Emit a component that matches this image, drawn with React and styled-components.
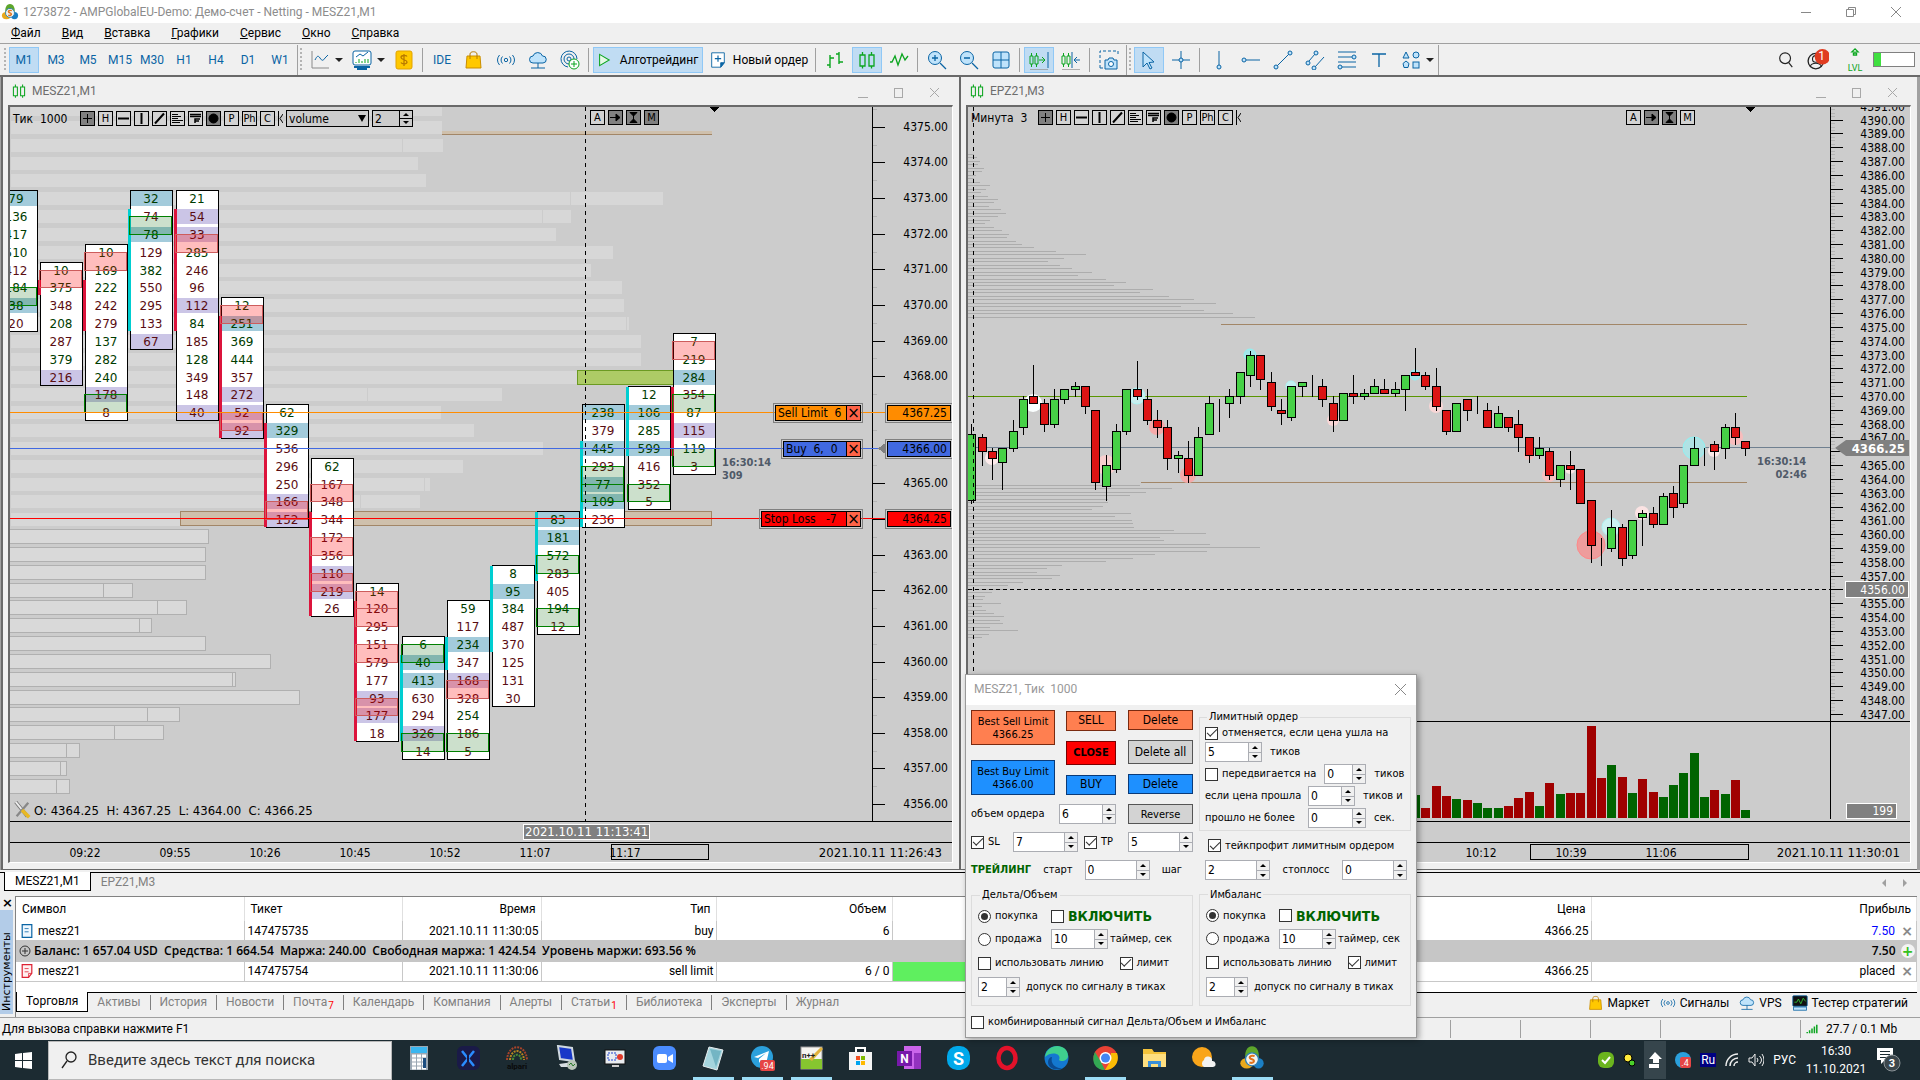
import React from 'react'
import styled, { createGlobalStyle, css } from 'styled-components'

const UI = 'Roboto, "Open Sans", sans-serif'
const CHART = '"DejaVu Sans Condensed", "DejaVu Sans", sans-serif'
const WIDE = '"DejaVu Sans", sans-serif'

/* ---------- data ---------- */

const timeframes = ['M1', 'M3', 'M5', 'M15', 'M30', 'H1', 'H4', 'D1', 'W1']
const menu = ['Файл', 'Вид', 'Вставка', 'Графики', 'Сервис', 'Окно', 'Справка']

// value, text colour (g / r), cell fill (b = blue, l = lilac)
const clusters = [
  { at: 0, rows: '79gb 136g 417g 510g 412r 184g 38gb 20r', marks: [['g', 5, 6]] },
  { at: 4, rows: '10g 375g 348r 208g 287r 379g 216rl', marks: [['r', 4, 5]], side: ['r', 5, 5] },
  { at: 3, rows: '10g 169g 222g 242r 279r 137g 282g 240g 178rl 8r', marks: [['r', 3, 4], ['g', 11, 12]], side: ['r', 5, 7] },
  { at: 0, rows: '32gb 74r 78gb 129r 382g 550r 295r 133r 67rl', marks: [['g', 1, 2]], side: ['c', 1, 7] },
  { at: 0, rows: '21g 54rl 33rl 285g 246r 96r 112rl 84g 185r 128g 349r 148r 40rl', marks: [['r', 2, 3]], side: ['r', 1, 7] },
  { at: 6, rows: '12g 251gb 369g 444g 357r 272rl 52rl 92rl', marks: [['r', 6, 7], ['r', 12, 13]], side: ['r', 7, 13] },
  { at: 12, rows: '62g 329gb 536r 296r 250r 166rl 152rl', marks: [['r', 17, 18]], side: ['r', 13, 18] },
  { at: 15, rows: '62g 167r 348r 344r 172r 356r 110rl 219rl 26r', marks: [['r', 16, 17], ['r', 19, 20], ['r', 21, 22]], side: ['r', 18, 23] },
  { at: 22, rows: '14g 120r 295r 151r 579r 177r 93rl 177rl 18r', marks: [['r', 22, 23], ['r', 23, 24], ['r', 25, 26], ['r', 28, 29]], side: ['r', 23, 30] },
  { at: 25, rows: '6g 40gb 413gb 630r 294r 326rl 14r', marks: [['g', 25, 26], ['g', 30, 31]], side: ['c', 26, 30] },
  { at: 23, rows: '59g 117r 234gb 347r 168rl 328r 254g 186r 5r', marks: [['r', 27, 28], ['g', 30, 31]], side: ['c', 25, 26] },
  { at: 21, rows: '8g 95gb 384g 487r 370r 125r 131r 30r', marks: [], side: ['c', 21, 25] },
  { at: 18, rows: '83gb 181gb 572g 283r 405r 194g 12r', marks: [['g', 20, 21], ['g', 23, 24]], side: ['c', 18, 21] },
  { at: 12, rows: '238gb 379r 445gb 293r 77gb 109gb 236r', marks: [['g', 15, 16], ['g', 16, 17]], side: ['c', 14, 18] },
  { at: 11, rows: '12g 106gb 285g 599gb 416r 352r 5r', marks: [['g', 16, 17]], side: ['c', 11, 14] },
  { at: 8, rows: '7g 219g 284gb 354r 87g 115rl 119g 3r', marks: [['r', 8, 9], ['g', 11, 12], ['g', 14, 15]], side: ['r', 11, 14] },
]

// volume profile of the left chart: row, length, inner split
const profile = [
  [-5, 431], [-4, 431], [-3, 432, 392], [-2, 407], [-1, 415], [0, 652, 560], [1, 560, 532], [2, 545],
  [3, 602], [4, 580], [5, 611], [6, 613], [7, 618, 616], [8, 630], [9, 630], [10, 567], [11, 491, 357],
  [12, 430], [13, 463], [14, 532], [15, 452], [16, 419, 414], [17, 409, 350], [18, 170],
]
const lowProfile = [
  [19, 199], [20, 196], [21, 196], [22, 123, 93], [23, 177, 147], [24, 142, 129], [25, 196], [26, 261],
  [27, 226, 222], [28, 290], [29, 170, 137], [30, 154, 104], [31, 70, 56], [32, 57, 50], [33, 60, 46],
]

// high, low, open, close in ticks from 4370.00
const candles = [
  [-8, -31, -30, -11], [-11, -20, -12, -16], [-15, -24, -16, -18], [-15, -27, -19, -15], [-7, -16, -15, -10],
  [0, -11, -9, -1], [9, -2, 0, -2], [-1, -10, -2, -8], [2, -9, -8, -1], [2, -2, -1, 2], [4, 0, 2, 3],
  [3, -5, 3, -3], [-4, -27, -4, -25], [-17, -30, -26, -20], [-8, -22, -21, -10], [2, -11, -10, 2],
  [10, -1, 2, 0], [2, -8, -1, -7], [-4, -12, -7, -9], [-7, -21, -9, -18], [-16, -22, -18, -17],
  [-13, -25, -18, -23], [-9, -23, -23, -12], [0, -11, -11, -2], [-1, -10, -2, -2], [2, -6, -2, 0],
  [7, -2, 0, 7], [13, 3, 6, 12], [12, 2, 12, 5], [7, -4, 4, -3], [-1, -8, -4, -5], [3, -7, -6, 3],
  [4, 0, 3, 4], [6, 0, 4, 4], [5, -3, 3, -1], [0, -10, -2, -7], [1, -7, -7, 1], [6, -2, 1, 0],
  [2, -1, 0, 1], [5, 1, 1, 3], [5, 1, 2, 1], [4, 0, 1, 2], [6, -4, 2, 6], [14, 6, 7, 6], [7, 2, 6, 3],
  [8, -4, 3, -3], [-4, -11, -4, -10], [-2, -10, -10, -2], [-1, -7, -1, -4], [0, -5, -3, -3],
  [-2, -9, -4, -9], [-3, -9, -9, -5], [-6, -10, -6, -9], [-4, -16, -8, -12], [-12, -19, -12, -17],
  [-12, -18, -17, -15], [-15, -24, -16, -23], [-20, -26, -24, -20], [-16, -27, -20, -21],
  [-21, -31, -21, -31], [-30, -48, -30, -43], [-41, -49, -43, -43], [-33, -45, -44, -38],
  [-37, -49, -38, -47], [-36, -47, -46, -36], [-33, -43, -35, -34], [-32, -38, -34, -37],
  [-28, -37, -37, -29], [-26, -35, -28, -32], [-20, -32, -31, -20], [-12, -20, -20, -15],
  [-15, -20, -15, -15], [-13, -21, -14, -16], [-8, -18, -15, -9], [-5, -14, -9, -12], [-13, -17, -13, -15],
]

// candle, tick, radius, fill, outline
const bubbles = [
  [6, -2, 9, '#fbffff'], [2, -18, 7, '#fdebeb'], [13, -20, 10, '#f8cfcf'], [16, 0, 8, '#c9eeee', '#aef5f5'],
  [18, -9, 8, '#f5a9a9'], [21, -23, 8, '#f5a9a9'], [27, 12, 6, '#a5e6e8', '#8ef3f5'], [31, 3, 5, '#c5eff0', '#aef5f5'],
  [35, -7, 6, '#f9d6d6'], [43, 6, 5, '#a5e6e8', '#8ef3f5'], [45, -3, 7, '#f9d6d6'], [54, -17, 5, '#f6b8b8'],
  [56, -23, 7, '#f8c0c0'], [58, -21, 5, '#fbe3e3'], [60, -43, 14, '#ee9c9c', '#ff8888'], [62, -38, 9, '#cdf1f1', '#aef5f5'],
  [65, -34, 7, '#fbe3e3'], [70, -15, 11, '#b0e2e4', '#8ef3f5'], [72, -16, 6, '#fdebeb'], [74, -12, 8, '#f8bcbc'],
]

// height and colour, first bar belongs to candle 43
const volumes = (
  '23g 10r 32r 22r 19g 18r 15g 10g 10g 12r 20r 26r 12g 35r 24g 25r 25r 92r 40r 53g 41r 25g 39r 26r ' +
  '21g 33g 45g 65g 21g 28r 24g 38r 8g'
).split(' ')

const upperLines = [
  6, 9, 12, 10, 16, 14, 8, 6, 12, 22, 18, 13, 20, 30, 26, 21, 33, 38, 30, 22, 17, 26, 34, 41, 39, 48, 54, 66, 88,
  118, 96, 80, 92, 104, 124, 110, 138, 158, 146, 185, 172, 201, 226, 248, 213, 236, 265, 287,
]
const lowerLines = [
  172, 204, 178, 162, 140, 140, 135, 124, 163, 147, 164, 165, 166, 206, 238, 192, 196, 242, 292, 239, 187, 165,
  138, 94, 79, 69, 92, 84, 55, 40, 39, 24, 17, 15, 33, 14, 18, 26, 36, 32, 35, 22, 50, 21, 14,
]

/* ---------- small drawings ---------- */

const blue = '#0a64a4'
const sky = '#bfe3fb'
const green = '#0ba51f'

const glyphs = {
  chart: <><path d="M2 1v17h17" stroke="#8a8a8a" /><path d="M5 10c2-4 3-5 5-2s3 3 5 0l3-3" stroke={blue} /></>,
  indicators: <><rect x="1" y="1" width="18" height="14" rx="2" stroke={blue} fill="#fff" /><path d="M4 7l4-3 3 2 5-4" stroke={blue} /><path d="M4 13v-1M7 13V9M10 13v-2M13 13V9M16 13v-4" stroke={green} /><path d="M2 17h16M5 19h10" stroke={blue} strokeWidth="2" /></>,
  dollar: <><rect x="2" y="1" width="16" height="18" rx="2" fill="#ffc800" stroke="#e2a400" /><path d="M13 6.500c-1-1.500-6-1.500-6 1s6 2 6 4.500-5 2.500-6 .5M10 4v12" stroke="#b87a00" strokeWidth="1.300" /></>,
  bag: <><path d="M3 6h13l1 12H2z" fill="#ffc800" stroke="#c98d00" /><path d="M6 9V4c0-3 7-3 7 0v5" stroke="#b87a00" /></>,
  signal: <><circle cx="10" cy="10" r="1.700" stroke={blue} /><path d="M6.500 6.500a5 5 0 0 0 0 7M13.500 6.500a5 5 0 0 1 0 7M3.500 5a8 8 0 0 0 0 10M16.500 5a8 8 0 0 1 0 10" stroke={blue} /></>,
  cloud: <><path d="M5 13a3.500 3.500 0 0 1 0-7 5 5 0 0 1 9.500 0 3.500 3.500 0 0 1 .5 7z" fill={sky} stroke={blue} /><path d="M10 13v5M3 18h14" stroke={blue} /></>,
  radar: <><circle cx="9" cy="9" r="2" stroke={blue} /><path d="M9 14a5 5 0 1 1 5-5M8 17a8 8 0 1 1 9-8" stroke={blue} /><circle cx="14" cy="14" r="5" fill="#fff" stroke={green} /><path d="M14 11v6M11 14h6" stroke={green} /></>,
  play: <path d="M2 3l12 7-12 7z" fill="#e6f9e6" stroke={green} strokeWidth="1.300" />,
  order: <><path d="M3 2h14v11l-4 5H3z" fill="#fff" stroke={blue} /><path d="M17 13h-4v5z" fill={blue} stroke={blue} /><path d="M10 5v7M6.500 8.500h7" stroke={blue} strokeWidth="1.300" /></>,
  bars: <path d="M5 5v13M2 15h3M5 8h4M14 2v12M11 4h3M14 12h4" stroke={green} strokeWidth="1.400" />,
  candles: <path d="M3 5h5v11H3zM5.500 2v3M5.500 16v2.500M12 5h5v11h-5zM14.500 2v3M14.500 16v2.500" stroke={green} strokeWidth="1.300" />,
  line: <path d="M1 12h2l3-6 3 9 4-11 3 6 3-4" stroke={green} strokeWidth="1.300" />,
  zoomIn: <><circle cx="8" cy="8" r="6.500" fill={sky} stroke={blue} /><path d="M13 13l6 6M8 5v6M5 8h6" stroke={blue} strokeWidth="1.300" /></>,
  zoomOut: <><circle cx="8" cy="8" r="6.500" fill={sky} stroke={blue} /><path d="M13 13l6 6M5 8h6" stroke={blue} strokeWidth="1.300" /></>,
  grid: <><rect x="2" y="2" width="16" height="16" rx="2" fill={sky} stroke={blue} /><path d="M10 2v16M2 10h16" stroke={blue} /></>,
  shift: <><path d="M1 6h3v8H1zM2.500 3v3M2.500 14v3M6 6h3v8H6zM7.500 3v3M7.500 14v3M10 10h6M13 7l3 3-3 3" stroke={green} /><path d="M19 2v16" stroke={blue} /><path d="M1 20h18" stroke="#999" strokeWidth="1.500" /></>,
  scroll: <><path d="M1 6h3v8H1zM2.500 3v3M2.500 14v3M6 6h3v8H6zM7.500 3v3M7.500 14v3" stroke={green} /><path d="M11 2v16M13 10h6M16 7l-3 3 3 3" stroke={blue} /><path d="M1 20h18" stroke="#999" strokeWidth="1.500" /></>,
  camera: <><path d="M1 18V1h18v5M1 18h3" stroke={blue} strokeDasharray="3 2" /><path d="M6 10h3l1-2h4l1 2h3v9H6z" fill={sky} stroke={blue} /><circle cx="12" cy="14" r="2.500" fill="#fff" stroke={blue} /></>,
  cursor: <path d="M4 2l11 10-5 .5 3 5.500-2 1-3-6-4 4z" fill={sky} stroke={blue} />,
  cross: <><path d="M10 1v18M1 10h18" stroke={blue} /><circle cx="10" cy="10" r="2" fill={sky} stroke={blue} /></>,
  vline: <><path d="M10 1v14" stroke={blue} /><circle cx="10" cy="17" r="2" fill={sky} stroke={blue} /></>,
  hline: <><path d="M5 10h14" stroke={blue} /><circle cx="3" cy="10" r="2" fill={sky} stroke={blue} /></>,
  trend: <><path d="M4 16L16 4" stroke={blue} /><circle cx="3" cy="17" r="2" fill={sky} stroke={blue} /><circle cx="17" cy="3" r="2" fill={sky} stroke={blue} /></>,
  channel: <><path d="M4 11l6-7M10 17l9-10" stroke={blue} /><circle cx="3" cy="13" r="2" fill={sky} stroke={blue} /><circle cx="11" cy="3" r="2" fill={sky} stroke={blue} /><circle cx="9" cy="18" r="2" fill={sky} stroke={blue} /></>,
  fibo: <><path d="M1 2h18M1 7h14M1 12h18M5 17h14" stroke={blue} /><circle cx="17" cy="7" r="2" fill={sky} stroke={blue} /><circle cx="3" cy="17" r="2" fill={sky} stroke={blue} /></>,
  text: <path d="M3 4h14M10 4v13" stroke={blue} strokeWidth="1.300" />,
  shapes: <><path d="M5 2l3 6H2zM5 11l3 2.500-1 4H3l-1-4z" fill={sky} stroke={blue} /><circle cx="15" cy="5" r="3" fill={sky} stroke={blue} /><rect x="12" y="12" width="6" height="6" fill={sky} stroke={blue} /></>,
  search: <><circle cx="9" cy="8" r="6" stroke="#222" strokeWidth="1.300" /><path d="M13 13l4 5" stroke="#222" strokeWidth="1.300" /></>,
  user: <><circle cx="8" cy="11" r="7" stroke="#222" strokeWidth="1.200" /><circle cx="8" cy="9" r="3" stroke="#222" /><path d="M3 16c1-4 9-4 10 0" stroke="#222" /><circle cx="14" cy="7" r="7" fill="#e03c20" /></>,
  level: <path d="M10 1L6 5h3v2H8v2h4V7h-1V5h3z" stroke={green} strokeWidth="1.500" fill="#e6f9e6" />,
  tester: <><rect x="1" y="1" width="18" height="13" rx="1" fill="#111" stroke={blue} /><path d="M3 9h3l2-4 3 6 3-7 3 4" stroke="#33d13c" /><rect x="2" y="15" width="16" height="4" fill={sky} stroke={blue} /></>,
  sigbars: <path d="M2 17v-2M6 17v-5M10 17V9M14 17V6M18 17V3" stroke={green} strokeWidth="2.500" />,
  wrench: <><path d="M3 1l13 16" stroke="#777" strokeWidth="4" /><path d="M3 1l13 16" stroke="#eee" strokeWidth="2" /><path d="M17 2L4 17" stroke="#888" strokeWidth="2.500" /><path d="M10 10l8 8" stroke="#e8b824" strokeWidth="4" /></>,
  doc: <><path d="M4 2h12v16H4z" fill="#eef7ff" stroke={blue} strokeWidth="1.500" /><path d="M7 7h5M7 11h5" stroke={blue} /></>,
  docRed: <><path d="M4 2h12v11l-4 5H4z" fill="#fff0f0" stroke="#d23" strokeWidth="1.500" /><path d="M7 7h5M7 11h5M16 13h-4v5" stroke="#d23" /></>,
  logo: <><ellipse cx="6" cy="14" rx="5" ry="4" fill="#e9a91d" /><ellipse cx="15" cy="14" rx="4" ry="4" fill="#1b7fc4" /><path d="M10 1c4 0 6 5 5 9-2 4-8 4-10 0C4 6 6 1 10 1z" fill="#5da62b" /><circle cx="10" cy="11" r="5" fill="#f0f4f0" stroke="#2d7db3" /><path d="M12 8.500c-4-1-5 1.500-2 2.500s1 3.500-2 2.500" stroke="#e2731d" strokeWidth="1.600" /></>,
}

function Glyph({ name, size = 20 }) {
  return (
    <svg width={size} height={size} viewBox="0 0 20 20" fill="none" aria-hidden="true">
      {glyphs[name]}
    </svg>
  )
}

const miniIcons = {
  plus: <path d="M7.500 3v9M3 7.500h9" />,
  dash: <path d="M2 7.500h11" strokeWidth="2" />,
  bar: <path d="M7.500 2v11" strokeWidth="2" />,
  slash: <path d="M3 12.500L12 2.500" strokeWidth="2" />,
  list: <path d="M2 3.500h6M2 5.500h9M2 7.500h6M2 9.500h11M2 11.500h8" />,
  flist: <path d="M2 3.500h11M2 5.500h11M7 12V8h5M7 10h4" strokeWidth="1.500" />,
  dot: <circle cx="7.500" cy="7.500" r="4.500" fill="#000" />,
  arrow: <path d="M2 7.500h8M8 4l4 3.500L8 11z" fill="#000" />,
  beam: <path d="M4 2.500h7L7.500 6zM4 12.500h7L7.500 9zM7.500 3v9" fill="#000" />,
}

const leftTools = [['plus', 1], 'H', ['dash'], ['bar'], ['slash'], ['list'], ['flist'], ['dot', 1], 'P', 'Ph', 'C']
const rightTools = ['A', ['arrow', 1], ['beam', 1], 'M']

function Mini({ item, on }) {
  const icon = Array.isArray(item)
  return (
    <MiniButton $on={on || (icon && item[1])} aria-label={icon ? item[0] : item}>
      {icon ? (
        <svg width="15" height="15" viewBox="0 0 15 15" fill="none" stroke="#000">{miniIcons[item[0]]}</svg>
      ) : item}
    </MiniButton>
  )
}

/* ---------- left chart ---------- */

const rowY = k => Math.round(92.3 + 17.83 * k)
const leftY = p => Math.round(198 + (4370 - p) * 35.65)
const ink = { g: '#003c00', r: '#5a0d12' }
const fills = { b: '#a3cbdb', l: '#cbc5e6' }
const markFill = { g: 'rgba(0, 100, 0, .2)', r: 'rgba(255, 0, 0, .26)' }
const markLine = { g: '#008000', r: '#cd5c5c' }

function Cluster({ index, at, rows, marks, side }) {
  const x = Math.round(30 + 45.2 * (index - 1))
  const cells = rows.split(' ')
  const top = rowY(at) - 9
  const bottom = rowY(at + cells.length - 1) + 8
  return (
    <g>
      <g shapeRendering="crispEdges">
        <rect x={x + 0.5} y={top + 0.5} width="42" height={bottom - top - 1} fill="#fff" stroke="#000" />
        {cells.map((c, i) => /[bl]$/.test(c) && (
          <rect key={i} x={x + 1} y={rowY(at + i) - 8} width="41" height="15" fill={fills[c.slice(-1)]} />
        ))}
        {side && (
          <rect x={x - 2} y={rowY(side[1]) - 8} width="3" height={rowY(side[2]) - rowY(side[1]) + 15} fill={side[0] === 'r' ? '#dc143c' : '#00ced1'} />
        )}
      </g>
      {cells.map((c, i) => (
        <ClusterText key={i} x={x + 21} y={rowY(at + i) + 4} fill={ink[c.replace(/\d/g, '')[0]]}>
          {parseInt(c)}
        </ClusterText>
      ))}
      {marks.map(([kind, a, b]) => (
        <rect key={a} x={x - 0.5} y={rowY(a) - 0.5} width="42" height={rowY(b) - rowY(a)} fill={markFill[kind]} stroke={markLine[kind]} shapeRendering="crispEdges" />
      ))}
    </g>
  )
}

function FootprintPlot() {
  return (
    <Plot>
      <g shapeRendering="crispEdges">
        {profile.map(([k, w, split]) => (
          <g key={k}>
            <rect x="1" y={rowY(k) - 7} width={w} height="13" fill="#d7d7d7" />
            {split && <rect x={split} y={rowY(k) - 7} width="1" height="13" fill="#ccc" />}
          </g>
        ))}
        {lowProfile.map(([k, w, split]) => (
          <g key={k} stroke="#b0b0b0" fill="#d9d9d9">
            <rect x="-0.5" y={rowY(k) - 8.5} width={w} height="14" />
            {split && <path d={`M${split}.500 ${rowY(k) - 8}v14`} />}
          </g>
        ))}
        <rect x="432" y="24" width="270" height="3" fill="#cfc0ac" />
        <rect x="432" y="27" width="270" height="1" fill="#a28667" />
        <rect x="170.500" y="404.500" width="531" height="14" fill="#cfc0ac" stroke="#a28667" />
        <rect x="567.500" y="263.500" width="96" height="14" fill="#adcb66" stroke="#6b9a22" />
      </g>
      {clusters.map((c, i) => <Cluster key={i} index={i} {...c} />)}
      <g shapeRendering="crispEdges">
        <rect x="0" y="305" width="100%" height="1" fill="#ff8c00" />
        <rect x="0" y="341" width="100%" height="1" fill="#4169e1" />
        <rect x="0" y="411" width="100%" height="1" fill="#f00" />
        <line x1="575.500" x2="575.500" y1="0" y2="100%" stroke="#000" strokeDasharray="4 4" />
        <path d="M699 0h10l-5 5z" fill="#000" />
      </g>
      <Countdown x="712" y="359">16:30:14</Countdown>
      <Countdown x="712" y="372">309</Countdown>
    </Plot>
  )
}

function FootprintAxis() {
  const prices = Array.from({ length: 20 }, (_, i) => 4375 - i)
  return (
    <Axis>
      <g shapeRendering="crispEdges">
        <rect width="1" height="100%" fill="#000" />
        {prices.map(p => (
          <g key={p}>
            <rect x="1" y={leftY(p)} width="12" height="1" fill="#000" />
            <rect x="1" y={leftY(p + 0.5)} width="4" height="1" fill="#b4b4b4" />
          </g>
        ))}
        <rect y="305" width="14" height="1" fill="#ff8c00" />
        <rect y="341" width="14" height="1" fill="#4169e1" />
        <rect y="411" width="14" height="1" fill="#f00" />
        <path d="M6 341.500l8-6v12z" fill="#808080" />
      </g>
      {prices.filter(p => ![4367, 4366, 4364].includes(p)).map(p => (
        <AxisText key={p} x="76" y={leftY(p) + 4}>{p}.00</AxisText>
      ))}
    </Axis>
  )
}

/* ---------- right chart ---------- */

const rightY = t => Math.round(289 - t * 3.455)
const candleX = i => Math.round(3.4 + 10.32 * i)

function CandlePlot() {
  return (
    <Plot>
      <g shapeRendering="crispEdges">
        {upperLines.map((w, i) => <rect key={i} y={Math.round(47 + i * 3.46)} width={w} height="1" fill="#adadad" />)}
        {lowerLines.map((w, i) => <rect key={i} y={Math.round(378 + i * 3.46)} width={w} height="1" fill="#adadad" />)}
        <rect x="253" y="217" width="526" height="1" fill="#a28667" />
        <rect x="0" y="289" width="779" height="1" fill="#5a9500" />
        <rect x="173" y="375" width="606" height="1" fill="#a28667" />
        <rect x="0" y="340" width="100%" height="1" fill="#708090" />
      </g>
      {bubbles.map(([i, t, r, fill, line]) => (
        <circle key={i} cx={candleX(i)} cy={rightY(t)} r={r} fill={fill} stroke={line || 'none'} />
      ))}
      <g shapeRendering="crispEdges">
        {candles.map(([high, low, open, close], i) => {
          const x = candleX(i)
          const top = rightY(Math.max(open, close))
          const h = Math.abs(rightY(open) - rightY(close))
          return (
            <g key={i}>
              <rect x={x} y={rightY(high)} width="1" height={rightY(low) - rightY(high) + 1} fill="#000" />
              <rect x={x - 3.5} y={top + 0.5} width="8" height={h} fill={close > open ? '#47d147' : '#dc1414'} stroke="#000" />
            </g>
          )
        })}
        <line x1="5.500" x2="5.500" y1="0" y2="100%" stroke="#000" strokeDasharray="4 4" />
        <line x1="0" x2="100%" y1="482.500" y2="482.500" stroke="#000" strokeDasharray="4 3" />
        <path d="M777 0h10l-5 5z" fill="#000" />
      </g>
      <Countdown x="789" y="358">16:30:14</Countdown>
      <Countdown x="839" y="371" textAnchor="end">02:46</Countdown>
    </Plot>
  )
}

function CandleAxis() {
  const prices = Array.from({ length: 45 }, (_, i) => 4391 - i).filter(p => p !== 4366 && p !== 4356)
  return (
    <Axis>
      <g shapeRendering="crispEdges">
        <rect width="1" height="100%" fill="#000" />
        {Array.from({ length: 177 }, (_, i) => 84 - i).map(t => (
          <rect key={t} x="1" y={rightY(t)} width={t % 4 ? 4 : 12} height="1" fill={t % 4 ? '#b4b4b4' : '#000'} />
        ))}
      </g>
      {prices.map(p => <AxisText key={p} x="75" y={rightY((p - 4370) * 4) + 5}>{p}.00</AxisText>)}
      <path d="M5 341l11-8h63v16H16z" fill="#808080" />
      <TagText x="75" y="346">4366.25</TagText>
      <rect x="15.500" y="474.500" width="63" height="16" fill="#808080" stroke="#fff" />
      <AxisText x="75" y="487" fill="#fff">4356.00</AxisText>
    </Axis>
  )
}

function Volumes() {
  return (
    <Plot>
      <g shapeRendering="crispEdges">
        {volumes.map((v, i) => {
          const h = parseInt(v)
          return <rect key={i} x={candleX(i + 43) - 4} y={96 - h} width="9" height={h} fill={v.endsWith('g') ? '#006400' : '#a00000'} />
        })}
      </g>
    </Plot>
  )
}

/* ---------- chart window ---------- */

function ChartWindow({ title, period, select, children }) {
  return (
    <Window>
      <WindowTitle>
        <Glyph name="candles" size={16} />
        <span>{title}</span>
        <WindowButtons>
          <button aria-label="Свернуть"><svg width="10" height="10" stroke="#a8a8a8"><path d="M0 9.500h10" /></svg></button>
          <button aria-label="Развернуть"><svg width="10" height="10" stroke="#a8a8a8" fill="none"><rect x=".5" y=".5" width="8" height="9" /></svg></button>
          <button aria-label="Закрыть"><svg width="10" height="10" stroke="#a8a8a8"><path d="M0 0l9 9M9 0L0 9" /></svg></button>
        </WindowButtons>
      </WindowTitle>
      <ChartBody>
        {children}
        <ChartTools>
          <Period>{period}</Period>
          {leftTools.map((t, i) => <Mini key={i} item={t} />)}
          <svg width="5" height="15" fill="none" stroke="#000"><path d="M.5 0v15M5 3L2 7.500 5 12" /></svg>
          {select && (
            <>
              <SelectBox>
                <select aria-label="volume" defaultValue="volume"><option>volume</option></select>
              </SelectBox>
              <Stepper width={41} height={17} value="2" label="Шаг кластера" dark />
            </>
          )}
        </ChartTools>
        <ChartToolsRight $end={select ? 293 : 215}>
          {rightTools.map((t, i) => <Mini key={i} item={t} on={select && t === 'M'} />)}
        </ChartToolsRight>
      </ChartBody>
    </Window>
  )
}

function Stepper({ width, height = 20, value, label, dark }) {
  return (
    <StepperBox $w={width} $h={height} $dark={dark}>
      <input type="number" defaultValue={value} aria-label={label} />
      <Spin $dark={dark}>
        <button type="button" aria-label="Больше" />
        <button type="button" aria-label="Меньше" />
      </Spin>
    </StepperBox>
  )
}

function Check({ children, checked, big }) {
  return (
    <CheckLabel $big={big}>
      <input type="checkbox" defaultChecked={checked} />
      {children}
    </CheckLabel>
  )
}

function SignalGroup({ title, name }) {
  return (
    <Group>
      <legend>{title}</legend>
      <SignalGrid>
        <CheckLabel><input type="radio" name={name} defaultChecked />покупка</CheckLabel>
        <Check big>ВКЛЮЧИТЬ</Check>
        <CheckLabel><input type="radio" name={name} />продажа</CheckLabel>
        <Line $gap={2}><Stepper width={57} value="10" label="таймер" />таймер, сек</Line>
      </SignalGrid>
      <Line $gap={16}><Check>использовать линию</Check><Check checked>лимит</Check></Line>
      <Line $gap={6}><Stepper width={42} value="2" label="допуск" />допуск по сигналу в тиках</Line>
    </Group>
  )
}

function OrderDialog() {
  return (
    <Dialog>
      <DialogTitle>
        <span>MESZ21, Тик&nbsp; 1000</span>
        <button type="button" aria-label="Закрыть"><svg width="11" height="11" stroke="#888"><path d="M0 0l11 11M11 0L0 11" /></svg></button>
      </DialogTitle>
      <DialogBody>
        <DialogColumn>
          <TradeGrid>
            <TradeLeft>
              <TradeStack $gap={15}>
                <TradeButton $kind="sell" $h={35}>Best Sell Limit<br />4366.25</TradeButton>
                <TradeButton $kind="buy" $h={35}>Best Buy Limit<br />4366.00</TradeButton>
              </TradeStack>
              <TradeStack $gap={10}>
                <TradeButton $kind="sell" $big>SELL</TradeButton>
                <TradeButton $kind="close" $h={24}>CLOSE</TradeButton>
                <TradeButton $kind="buy" $big>BUY</TradeButton>
              </TradeStack>
              <span>объем ордера</span>
              <VolumeCell><Stepper width={57} value="6" label="объем ордера" /></VolumeCell>
            </TradeLeft>
            <TradeStack $gap={10}>
              <TradeButton $kind="sell" $big>Delete</TradeButton>
              <TradeButton $h={24} $big>Delete all</TradeButton>
              <TradeButton $kind="buy" $big>Delete</TradeButton>
              <TradeButton>Reverse</TradeButton>
            </TradeStack>
          </TradeGrid>
          <StopGrid>
            <Check checked>SL</Check><Stepper width={65} value="7" label="SL" />
            <Check checked>TP</Check><Stepper width={65} value="5" label="TP" />
          </StopGrid>
          <Spread $end={11}>
            <Trailing>ТРЕЙЛИНГ</Trailing><span>старт</span>
            <Stepper width={65} value="0" label="старт" /><span>шаг</span>
          </Spread>
          <SignalGroup title="Дельта/Объем" name="delta" />
        </DialogColumn>
        <DialogColumn>
          <Group $limit>
            <legend>Лимитный ордер</legend>
            <Line><Check checked>отменяется, если цена ушла на</Check></Line>
            <Line $gap={8}><Stepper width={57} value="5" label="отмена" />тиков</Line>
            <Line $gap={8}><Check>передвигается на</Check><Stepper width={42} value="0" label="сдвиг" />тиков</Line>
            <Line $gap={8}><LimitText>если цена прошла</LimitText><Stepper width={47} value="0" label="прошла" />тиков и</Line>
            <Line $gap={8}><LimitText>прошло не более</LimitText><Stepper width={58} value="0" label="секунд" />сек.</Line>
          </Group>
          <Line $start={9}><Check checked>тейкпрофит лимитным ордером</Check></Line>
          <Spread $start={6} $end={4}>
            <Stepper width={65} value="2" label="шаг" /><span>стоплосс</span><Stepper width={65} value="0" label="стоплосс" />
          </Spread>
          <SignalGroup title="Имбаланс" name="imbalance" />
        </DialogColumn>
      </DialogBody>
      <DialogFooter><Check>комбинированный сигнал Дельта/Объем и Имбаланс</Check></DialogFooter>
    </Dialog>
  )
}

/* ---------- terminal ---------- */

const toolTabs = [
  ['Торговля'], ['Активы'], ['История'], ['Новости'], ['Почта', '7'], ['Календарь'], ['Компания'],
  ['Алерты'], ['Статьи', '1'], ['Библиотека'], ['Эксперты'], ['Журнал'],
]
const services = [['bag', 'Маркет'], ['signal', 'Сигналы'], ['cloud', 'VPS'], ['tester', 'Тестер стратегий']]

function Terminal() {
  return (
    <TerminalBox>
      <SideStrip>
        <button aria-label="Закрыть">×</button>
        <SideLabel>Инструменты</SideLabel>
      </SideStrip>
      <TerminalMain>
        <TradeTable>
          <colgroup>
            <col width="228" /><col width="158" /><col width="139" /><col width="175" /><col width="176" />
            <col width="250" /><col width="449" /><col />
          </colgroup>
          <thead>
            <tr><Th $left>Символ</Th><Th $left>Тикет</Th><Th>Время</Th><Th>Тип</Th><Th>Объем</Th><Th /><Th>Цена</Th><Th>Прибыль</Th></tr>
          </thead>
          <tbody>
            <tr>
              <Td $left><Symbol><Glyph name="doc" size={16} />mesz21</Symbol></Td><Td $left>147475735</Td>
              <Td>2021.10.11 11:30:05</Td><Td>buy</Td><Td>6</Td><Td /><Td>4366.25</Td>
              <Td><Profit $color="#0000ff">7.50<button aria-label="Закрыть позицию">×</button></Profit></Td>
            </tr>
            <Summary>
              <td colSpan="7">
                <Symbol>
                  <svg width="12" height="12" fill="none" stroke="#333"><circle cx="6" cy="6" r="5" /><path d="M6 3v6M3 6h6" /></svg>
                  <span>Баланс: 1 657.04 USD&nbsp; Средства: 1 664.54&nbsp; Маржа: 240.00&nbsp; Свободная маржа: 1 424.54&nbsp; Уровень маржи: 693.56 %</span>
                </Symbol>
              </td>
              <td><Profit>7.50<AddButton aria-label="Добавить">+</AddButton></Profit></td>
            </Summary>
            <tr>
              <Td $left><Symbol><Glyph name="docRed" size={16} />mesz21</Symbol></Td><Td $left>147475754</Td>
              <Td>2021.10.11 11:30:06</Td><Td>sell limit</Td><Td>6 / 0</Td><Td $fill="#5fef5f" /><Td>4366.25</Td>
              <Td><Profit>placed<button aria-label="Удалить ордер">×</button></Profit></Td>
            </tr>
          </tbody>
        </TradeTable>
        <ToolTabs>
          {toolTabs.map(([t, n], i) => (
            <ToolTab key={t} $active={i === 0}>{t}{n && <sub>{n}</sub>}</ToolTab>
          ))}
          <Services>
            {services.map(([icon, t]) => <button key={t}><Glyph name={icon} size={16} />{t}</button>)}
          </Services>
        </ToolTabs>
      </TerminalMain>
    </TerminalBox>
  )
}

/* ---------- taskbar ---------- */

const apps = [
  ['Калькулятор', 0, <><rect x="4" y="1" width="18" height="24" fill="#9aa7b3" /><rect x="5" y="2" width="16" height="6" fill="#3ab6f0" /><path d="M6 11h14M6 15h14M6 19h14M6 23h14" stroke="#fff" strokeWidth="3" strokeDasharray="4 1" /><path d="M17 13h3v10h-3z" fill="#1b4d80" /></>],
  ['X', 0, <><rect x="2" y="1" width="23" height="24" rx="6" fill="#1a1a48" /><path d="M7 6l12 15M19 6L7 21" stroke="#2a8cff" strokeWidth="2.500" /><path d="M13 5v17" stroke="#1a1a48" strokeWidth="2" /></>],
  ['Alpari', 0, <><path d="M3 15C4-2 22-2 23 15" stroke="#a8442a" strokeWidth="2" strokeDasharray="2 1" /><path d="M6 15c1-12 13-12 14 0" stroke="#b8871f" strokeWidth="2" strokeDasharray="2 1" /><path d="M9 15c0-7 8-7 8 0" stroke="#4b8a35" strokeWidth="2" strokeDasharray="2 1" /><text x="13" y="24" textAnchor="middle" fontSize="8" fontWeight="700" fill="#0a0a0a">alpari</text></>],
  ['Сеть', 0, <><path d="M5 1l14 2 2 13-14-2z" fill="#1838c8" stroke="#cfd8e0" strokeWidth="2" /><path d="M6 19l14-2 2 5H8z" fill="#d8dde2" /><circle cx="19" cy="20" r="5" fill="#b8c4b8" /><path d="M16 20l2-2 2 3 2-2" stroke="#287a28" /></>],
  ['Экран', 0, <><rect x="3" y="5" width="20" height="14" fill="#e9edf0" stroke="#111" /><rect x="6" y="8" width="8" height="7" stroke="#2244cc" strokeDasharray="2 1" /><circle cx="18" cy="12" r="3" fill="#e03a2a" /><path d="M10 21h7" stroke="#ccc" strokeWidth="2" /></>],
  ['Zoom', 0, <><rect x="2" y="1" width="23" height="24" rx="6" fill="#4a8cff" /><rect x="6" y="9" width="10" height="9" rx="2" fill="#fff" /><path d="M17 12l5-3v9l-5-3z" fill="#fff" /></>],
  ['Блокнот', 1, <><path d="M9 2l14 3-6 20-14-4z" fill="#a5d5de" stroke="#e8eef0" /><path d="M10 4l11 2-5 16" fill="#74b5c4" /></>],
  ['Telegram', 1, <><circle cx="13" cy="12" r="11" fill="#2ba0dc" /><path d="M5 12l15-6-3 13-5-4-2 3v-4l7-6-8 5z" fill="#fff" /><rect x="11" y="15" width="15" height="11" rx="2" fill="#e64545" /><text x="18.500" y="24" textAnchor="middle" fontSize="9" fill="#fff">.94</text></>],
  ['Notepad++', 1, <><rect x="3" y="2" width="21" height="22" fill="#f5f5f0" stroke="#999" /><path d="M3 14h21v10H3z" fill="#86c62f" /><path d="M11 14L23 2l2 2-11 12z" fill="#e2b33c" /><text x="4" y="13" fontSize="8" fontWeight="700" fill="#222">n++</text></>],
  ['Store', 0, <><path d="M9 7V3h9v4" stroke="#fff" strokeWidth="2" /><path d="M2 7h23v18H2z" fill="#f5f5f5" /><path d="M9 11h4v4H9z" fill="#f25022" /><path d="M14 11h4v4h-4z" fill="#7fba00" /><path d="M9 16h4v4H9z" fill="#00a4ef" /><path d="M14 16h4v4h-4z" fill="#ffb900" /></>],
  ['OneNote', 0, <><path d="M8 1h17v23H8z" fill="#ca64ea" /><path d="M18 8h7v16h-7z" fill="#9332bf" /><rect x="1" y="6" width="15" height="15" fill="#7719aa" /><text x="8.500" y="18" textAnchor="middle" fontSize="12" fontWeight="700" fill="#fff">N</text></>],
  ['Skype', 0, <><rect x="2" y="1" width="23" height="24" rx="10" fill="#00a8ea" /><text x="13.500" y="20" textAnchor="middle" fontSize="18" fontWeight="700" fill="#fff">S</text></>],
  ['Opera', 0, <ellipse cx="13" cy="13" rx="8.500" ry="10" stroke="#e3122a" strokeWidth="4.500" />],
  ['Edge', 0, <><circle cx="13.500" cy="13" r="12" fill="#1478d0" /><path d="M2 12C4-3 25-2 25 11c0 5-7 6-9 4 3-7-8-9-14-3z" fill="#3fcf8e" /><path d="M9 12c-2 7 4 12 11 11-6 3-15 1-15-6 0-3 2-5 4-5z" fill="#0b4b91" /></>],
  ['Chrome', 1, <><circle cx="13.500" cy="13" r="12" fill="#e84235" /><path d="M3 7l6 10 4 8C2 25-1 15 3 7z" fill="#33a853" /><path d="M13 25l6-10V8h6c3 8-2 17-12 17z" fill="#fbbc05" /><circle cx="13.500" cy="13" r="6" fill="#fff" /><circle cx="13.500" cy="13" r="4.500" fill="#4386f5" /></>],
  ['Проводник', 0, <><path d="M2 4h9l2 3h12v15H2z" fill="#f5c33b" /><path d="M2 9h23v13H2z" fill="#ffdf80" /><path d="M7 22v-6h13v6h-3v-3h-7v3z" fill="#3a8fd8" /></>],
  ['Погода', 0, <><circle cx="12" cy="12" r="10" fill="#f9a51a" /><path d="M14 22a4 4 0 0 1 0-7 4 4 0 0 1 8 1 3 3 0 0 1 1 6z" fill="#f2f2f2" /></>],
  ['MetaTrader', 1, <g transform="scale(1.300)">{glyphs.logo}</g>],
]

function Taskbar() {
  return (
    <TaskbarBox>
      <StartButton aria-label="Пуск">
        <svg width="17" height="17" fill="#fff"><path d="M0 2l7-1v7H0zM8 1l9-1v8H8zM0 9h7v7l-7-1zM8 9h9v8l-9-1z" /></svg>
      </StartButton>
      <SearchBox>
        <svg width="16" height="18" fill="none" stroke="#222" strokeWidth="1.300"><circle cx="10" cy="6" r="5" /><path d="M6 10l-5 7" /></svg>
        <input placeholder="Введите здесь текст для поиска" aria-label="Поиск" />
      </SearchBox>
      {apps.map(([name, open, art]) => (
        <AppButton key={name} $open={open} aria-label={name}>
          <svg width="27" height="27" fill="none">{art}</svg>
        </AppButton>
      ))}
      <Tray>
        <svg width="16" height="16"><rect width="16" height="16" rx="6" fill="#6bb41e" /><path d="M4 8l3 3 5-6" stroke="#fff" strokeWidth="2" fill="none" /></svg>
        <svg width="12" height="14"><circle cx="5" cy="5" r="4" fill="#ffeb3b" stroke="#000" /><circle cx="9" cy="10" r="3" fill="#4bd12b" stroke="#000" /></svg>
        <TrayActive><svg width="14" height="16" fill="#fff"><path d="M7 0l7 7h-3v4H5V7H1zM1 12h10v4H1z" /></svg></TrayActive>
        <svg width="16" height="16"><circle cx="8" cy="8" r="8" fill="#2ba0dc" /><rect x="5" y="5" width="11" height="11" rx="2" fill="#e64545" /><text x="10" y="14" fontSize="9" textAnchor="middle" fill="#fff">.4</text></svg>
        <Lang>Ru</Lang>
        <svg width="14" height="14" fill="none" stroke="#eee"><path d="M1 13A12 12 0 0 1 13 1M5 13a8 8 0 0 1 8-8M9 13a4 4 0 0 1 4-4" strokeWidth="1.500" /></svg>
        <svg width="16" height="14" fill="none" stroke="#eee"><path d="M1 5h3l3-4v12L4 9H1zM9 5q2 2 0 4M11.500 3q4 4 0 8M14 1q4 6 0 12" /></svg>
        <span>РУС</span>
        <Clock><span>16:30</span><span>11.10.2021</span></Clock>
        <svg width="26" height="26"><path d="M1 1h16v12H9l-4 4v-4H1z" fill="#fff" /><path d="M4 4.500h10M4 7.500h10M4 10.500h7" stroke="#1c2b32" /><circle cx="16" cy="16" r="8" fill="#3b464c" stroke="#8a9296" /><text x="16" y="20" fontSize="11" fontWeight="700" textAnchor="middle" fill="#fff">3</text></svg>
      </Tray>
    </TaskbarBox>
  )
}

/* ---------- page ---------- */

const Tools = ({ names, on }) => names.map(n => <Tool key={n} $on={n === on} aria-label={n}><Glyph name={n} /></Tool>)

export default function App() {
  return (
    <Page>
      <Global />
      <TitleBar>
        <Glyph name="logo" size={18} />
        <span>1273872 - AMPGlobalEU-Demo: Демо-счет - Netting - MESZ21,M1</span>
        <TitleButtons>
          <button aria-label="Свернуть"><svg width="10" height="10" stroke="#888"><path d="M0 5.500h10" /></svg></button>
          <button aria-label="Восстановить"><svg width="10" height="10" stroke="#888" fill="none"><path d="M.5 2.500h7v7h-7zM2.500 2V.5h7v7H8" /></svg></button>
          <button aria-label="Закрыть"><svg width="10" height="10" stroke="#888"><path d="M0 0l10 10M10 0L0 10" /></svg></button>
        </TitleButtons>
      </TitleBar>
      <MenuBar>
        {menu.map(m => <button key={m}><u>{m[0]}</u>{m.slice(1)}</button>)}
      </MenuBar>
      <Toolbar>
        <Grip />
        {timeframes.map((t, i) => <Tool key={t} $on={i === 0}>{t}</Tool>)}
        <Divider /><Grip />
        <Tool $drop aria-label="chart"><Glyph name="chart" /></Tool>
        <Tool $drop aria-label="indicators"><Glyph name="indicators" /></Tool>
        <Tools names={['dollar']} />
        <Sep />
        <Tool>IDE</Tool>
        <Tools names={['bag', 'signal', 'cloud', 'radar']} />
        <Sep />
        <WideTool $on $w={110}><Glyph name="play" size={16} />Алготрейдинг</WideTool>
        <WideTool $w={107}><Glyph name="order" size={18} />Новый ордер</WideTool>
        <Sep />
        <Tools names={['bars', 'candles', 'line']} on="candles" />
        <Sep />
        <Tools names={['zoomIn', 'zoomOut', 'grid']} />
        <Sep />
        <Tools names={['shift', 'scroll']} on="shift" />
        <Sep />
        <Tools names={['camera']} />
        <Divider /><Grip />
        <Tools names={['cursor', 'cross']} on="cursor" />
        <Sep />
        <Tools names={['vline', 'hline', 'trend', 'channel', 'fibo', 'text']} />
        <Tool $drop aria-label="shapes"><Glyph name="shapes" /></Tool>
        <Divider />
        <ToolbarEnd>
          <Tool aria-label="Поиск"><Glyph name="search" size={18} /></Tool>
          <Tool aria-label="Профиль"><Glyph name="user" size={22} /><Badge>1</Badge></Tool>
          <Level><Glyph name="level" size={16} />LVL</Level>
          <Battery><i /></Battery>
        </ToolbarEnd>
      </Toolbar>

      <Workspace>
        <ChartWindow title="MESZ21,M1" period={'Тик  1000'} select>
          <PlotRow>
            <FootprintPlot />
            <FootprintAxis />
            <OrderTag $top={298} $w={86} $bg="#ff8c00">Sell Limit&nbsp; 6<button aria-label="Отменить">×</button></OrderTag>
            <OrderTag $top={334} $w={78} $bg="#4169e1">Buy&nbsp; 6,&nbsp; 0<button aria-label="Отменить">×</button></OrderTag>
            <OrderTag $top={404} $w={100} $bg="#f00">Stop Loss&nbsp;&nbsp; -7<button aria-label="Отменить">×</button></OrderTag>
            <PriceTag $top={298} $bg="#ff8c00">4367.25</PriceTag>
            <PriceTag $top={334} $bg="#4169e1">4366.00</PriceTag>
            <PriceTag $top={404} $bg="#f00">4364.25</PriceTag>
            <Ohlc><Glyph name="wrench" size={18} />O: 4364.25&nbsp; H: 4367.25&nbsp; L: 4364.00&nbsp; C: 4366.25</Ohlc>
          </PlotRow>
          <CursorBand $start={513}><span>2021.10.11 11:13:41</span></CursorBand>
          <TimeAxis $start={30}>
            {['09:22', '09:55', '10:26', '10:45', '10:52', '11:07', '11:17'].map(t => <span key={t}>{t}</span>)}
            <TimeFrame $x={601} $w={98} />
            <time>2021.10.11 11:26:43</time>
          </TimeAxis>
        </ChartWindow>
        <ChartWindow title="EPZ21,M3" period={'Минута  3'}>
          <PlotRow>
            <CandlePlot />
            <CandleAxis />
          </PlotRow>
          <VolumeRow>
            <Volumes />
            <VolumeAxis><span>199</span></VolumeAxis>
          </VolumeRow>
          <CursorBand />
          <TimeAxis $start={468}>
            {['10:12', '10:39', '11:06'].map(t => <span key={t}>{t}</span>)}
            <TimeFrame $x={562} $w={219} />
            <time>2021.10.11 11:30:01</time>
          </TimeAxis>
        </ChartWindow>
      </Workspace>

      <ChartTabs>
        <ChartTab $active>MESZ21,M1</ChartTab>
        <ChartTab>EPZ21,M3</ChartTab>
        <TabArrows>
          <button aria-label="Назад"><svg width="4" height="8" fill="#a0a0a0"><path d="M4 0v8L0 4z" /></svg></button>
          <button aria-label="Вперед"><svg width="4" height="8" fill="#a0a0a0"><path d="M0 0v8l4-4z" /></svg></button>
        </TabArrows>
      </ChartTabs>
      <Terminal />
      <StatusBar>
        <span>Для вызова справки нажмите F1</span>
        <StatusCells>
          <i /><i /><i /><i /><i />
          <b><Glyph name="sigbars" size={12} />27.7 / 0.1 Mb</b>
        </StatusCells>
      </StatusBar>
      <Taskbar />
      <OrderDialog />
    </Page>
  )
}

/* ---------- styles ---------- */

const Global = createGlobalStyle`
  * { box-sizing: border-box; }
  body { margin: 0; background: #f0f0f0; font-family: ${UI}; font-size: 12px; color: #000; }
  button, input, select { font: inherit; color: inherit; padding: 0; margin: 0; }
  button { border: 0; background: none; }
  svg { display: block; flex: none; }
`

const Page = styled.div`
  position: relative;
  display: flex;
  flex-direction: column;
  min-height: 100vh;
`

const TitleBar = styled.div`
  display: flex;
  align-items: center;
  gap: 4px;
  height: 23px;
  padding: 0 19px 0 1px;
  background: #fff;
  color: #8c8c8c;
`

const TitleButtons = styled.div`
  display: flex;
  gap: 35px;
  margin-left: auto;
`

const MenuBar = styled.div`
  display: flex;
  gap: 21px;
  height: 20px;
  padding-left: 11px;
`

const Toolbar = styled.div`
  display: flex;
  align-items: center;
  gap: 2px;
  height: 32px;
  padding: 0 5px 0 4px;
  border-top: 1px solid #a0a0a0;
`

const Grip = styled.i`
  width: 2px;
  height: 24px;
  margin-right: 1px;
  background: repeating-linear-gradient(#b4b4b4 0 2px, transparent 2px 4px);
`

const Divider = styled.i`
  width: 1px;
  height: 30px;
  background: #a0a0a0;
`

const Sep = styled(Divider)`
  height: 24px;
  margin: 0 2px 0 1px;
`

const Tool = styled.button`
  position: relative;
  display: flex;
  align-items: center;
  justify-content: center;
  width: ${p => (p.$drop ? 40 : 30)}px;
  height: 26px;
  padding-right: ${p => (p.$drop ? 10 : 0)}px;
  color: #0a64a4;
  ${p => p.$on && css`
    background: #c0dcf3;
    border: 1px solid #90c8f6;
  `}
  ${p => p.$drop && css`
    &::after {
      content: '';
      position: absolute;
      right: 2px;
      border: 4px solid transparent;
      border-top-color: #222;
      border-bottom: 0;
    }
  `}
`

const WideTool = styled(Tool)`
  width: ${p => p.$w}px;
  gap: 6px;
  color: #000;
`

const Badge = styled.span`
  position: absolute;
  right: 8px;
  top: 2px;
  color: #fff;
`

const ToolbarEnd = styled.div`
  display: flex;
  align-items: center;
  gap: 2px;
  margin-left: auto;
`

const Level = styled.div`
  display: flex;
  flex-direction: column;
  align-items: center;
  margin: 0 8px 0 12px;
  font-size: 9px;
  line-height: 8px;
  color: #0ba51f;
`

const Battery = styled.div`
  width: 42px;
  height: 15px;
  border: 1px solid #808080;
  background: #fff;
  i { display: block; width: 7px; height: 13px; background: #3fdf3f; }
`

const Workspace = styled.div`
  flex: 1;
  display: flex;
  padding: 0 3px 0 1px;
  border-top: 2px solid #696969;
  background: #a0a0a0;
`

const Window = styled.section`
  flex: 1;
  display: flex;
  flex-direction: column;
  min-width: 0;
  padding: 0 6px 6px 5px;
  border-left: 2px solid #696969;
  border-bottom: 1px solid #696969;
  background: #f0f0f0;
`

const WindowTitle = styled.div`
  display: flex;
  align-items: center;
  gap: 5px;
  height: 28px;
  padding: 0 13px 0 3px;
  color: #6d6d6d;
`

const WindowButtons = styled.div`
  display: flex;
  gap: 26px;
  margin-left: auto;
  padding-top: 4px;
`

const ChartBody = styled.div`
  position: relative;
  flex: 1;
  display: flex;
  flex-direction: column;
  border: 2px solid #696969;
  border-right: 1px solid #fff;
  border-bottom: 1px solid #fff;
  background: #ccc;
  font-family: ${CHART};
  overflow: hidden;
`

const PlotRow = styled.div`
  position: relative;
  flex: 1;
  display: flex;
  min-height: 600px;
`

const Plot = styled.svg`
  flex: 1;
  min-width: 0;
  height: auto;
`

const Axis = styled.svg`
  width: 80px;
  height: auto;
`

const ClusterText = styled.text`
  font: 12px ${WIDE};
  text-anchor: middle;
`

const AxisText = styled.text`
  font: 12px ${CHART};
  text-anchor: end;
`

const TagText = styled.text`
  font: bold 13px ${CHART};
  text-anchor: end;
  fill: #fff;
`

const Countdown = styled.text`
  font: bold 11px ${CHART};
  fill: #505a68;
`

const ChartTools = styled.div`
  position: absolute;
  top: 3px;
  left: 3px;
  display: flex;
  align-items: center;
  gap: 3px;
`

const ChartToolsRight = styled(ChartTools)`
  left: auto;
  right: ${p => p.$end}px;
`

const Period = styled.span`
  width: 64px;
  white-space: pre;
`

const MiniButton = styled.button`
  display: flex;
  align-items: center;
  justify-content: center;
  width: 15px;
  height: 15px;
  border: 1px solid #000;
  background: ${p => (p.$on ? '#808080' : '#d3d3d3')};
  font-size: 11px;
  line-height: 13px;
  overflow: hidden;
  svg { margin: -1px; }
`

const SelectBox = styled.span`
  position: relative;
  width: 83px;
  select {
    display: block;
    width: 100%;
    height: 17px;
    padding-left: 2px;
    border: 1px solid #000;
    border-radius: 0;
    background: #ccc;
    appearance: none;
  }
  &::after {
    content: '';
    position: absolute;
    right: 3px;
    top: 5px;
    border: 4px solid transparent;
    border-top: 7px solid #000;
    border-bottom: 0;
    pointer-events: none;
  }
`

const StepperBox = styled.span`
  display: flex;
  flex: none;
  width: ${p => p.$w}px;
  height: ${p => p.$h}px;
  border: 1px solid ${p => (p.$dark ? '#000' : '#abadb3')};
  background: ${p => (p.$dark ? '#ccc' : '#fff')};
  input {
    flex: 1;
    min-width: 0;
    padding-left: 2px;
    border: 0;
    background: none;
    font: 12px ${CHART};
    appearance: textfield;
  }
  input::-webkit-inner-spin-button { display: none; }
`

const Spin = styled.span`
  display: flex;
  flex-direction: column;
  width: 13px;
  border-left: 1px solid ${p => (p.$dark ? '#000' : '#abadb3')};
  button {
    flex: 1;
    display: flex;
    align-items: center;
    justify-content: center;
    background: ${p => (p.$dark ? 'none' : '#f0f0f0')};
  }
  button::after {
    content: '';
    border: 3px solid transparent;
    border-bottom-color: #000;
    border-top: 0;
  }
  button + button { border-top: 1px solid ${p => (p.$dark ? '#000' : '#abadb3')}; }
  button + button::after { transform: rotate(180deg); }
`

const OrderTag = styled.div`
  position: absolute;
  right: 91px;
  top: ${p => p.$top}px;
  display: flex;
  align-items: center;
  justify-content: space-between;
  width: ${p => p.$w}px;
  height: 16px;
  padding-left: 2px;
  border: 1px solid #000;
  outline: 1px solid #808080;
  outline-offset: 1px;
  background: ${p => p.$bg};
  button {
    width: 14px;
    height: 14px;
    border-left: 1px solid #000;
    background: #ff6347;
    font: 15px/13px ${WIDE};
  }
`

const PriceTag = styled(OrderTag)`
  right: 1px;
  width: 64px;
  justify-content: flex-end;
  padding-right: 3px;
`

const Ohlc = styled.div`
  position: absolute;
  left: 3px;
  bottom: 2px;
  display: flex;
  align-items: center;
  gap: 3px;
  font-size: 13px;
`

const VolumeRow = styled.div`
  display: flex;
  height: 100px;
  border-top: 1px solid #000;
`

const VolumeAxis = styled.div`
  width: 80px;
  height: 97px;
  padding: 81px 0 0 15px;
  border-left: 1px solid #000;
  span {
    display: block;
    width: 51px;
    padding-right: 3px;
    border: 1px solid #fff;
    background: #808080;
    color: #fff;
    line-height: 14px;
    text-align: right;
  }
`

const CursorBand = styled.div`
  height: 21px;
  padding: 2px 0 0 ${p => p.$start || 0}px;
  border-top: 1px solid #000;
  span {
    display: inline-block;
    padding: 0 1px;
    border: 1px solid #fff;
    background: #808080;
    color: #fff;
    font-size: 13px;
    line-height: 14px;
  }
`

const TimeAxis = styled.div`
  position: relative;
  display: flex;
  align-items: center;
  height: 20px;
  padding: 0 10px 0 ${p => p.$start}px;
  border-top: 1px solid #000;
  span { width: 90px; text-align: center; }
  time { margin-left: auto; font-size: 13px; }
`

const TimeFrame = styled.i`
  position: absolute;
  left: ${p => p.$x}px;
  top: 1px;
  width: ${p => p.$w}px;
  height: 16px;
  border: 1px solid #000;
`

const ChartTabs = styled.div`
  display: flex;
  align-items: flex-start;
  height: 24px;
  margin-top: 2px;
  padding-left: 4px;
  border-top: 1px solid #000;
`

const ChartTab = styled.button`
  height: 19px;
  padding: 0 10px;
  margin-top: -1px;
  color: #808080;
  ${p => p.$active && css`
    border: 1px solid #000;
    border-top: 0;
    background: #fff;
    color: #000;
  `}
`

const TabArrows = styled.div`
  display: flex;
  gap: 17px;
  margin-left: auto;
  padding: 6px 13px 0 0;
`

const TerminalBox = styled.div`
  display: flex;
  height: 121px;
`

const SideStrip = styled.div`
  display: flex;
  flex-direction: column;
  width: 15px;
  button { height: 14px; font: bold 13px/10px ${WIDE}; }
`

const SideLabel = styled.span`
  width: 13px;
  height: 104px;
  padding-top: 3px;
  background: #b3cce8;
  font: 11px/13px ${WIDE};
  writing-mode: vertical-rl;
  transform: rotate(180deg);
`

const TerminalMain = styled.div`
  flex: 1;
  display: flex;
  flex-direction: column;
  min-width: 0;
  margin-right: 3px;
  border-top: 1px solid #828282;
  border-left: 1px solid #828282;
  background: #fff;
`

const TradeTable = styled.table`
  width: 100%;
  table-layout: fixed;
  border-collapse: collapse;
  border-bottom: 1px solid #c8c8c8;
  td { height: 19px; padding: 0 2px 0 3px; line-height: 16px; }
`

const Th = styled.th`
  height: 24px;
  padding: 0 5px 0 6px;
  border-right: 1px solid #e0e0e0;
  font-weight: 400;
  text-align: ${p => (p.$left ? 'left' : 'right')};
`

const Td = styled.td`
  border-right: 1px solid #c8c8c8;
  text-align: ${p => (p.$left ? 'left' : 'right')};
  white-space: nowrap;
  background: ${p => p.$fill || 'none'};
`

const Summary = styled.tr`
  background: #c6c6c6;
  font-family: "Open Sans", sans-serif;
  font-weight: 600;
  && td { height: 22px; }
`

const Symbol = styled.span`
  display: flex;
  align-items: center;
  gap: 3px;
`

const Profit = styled.span`
  display: flex;
  justify-content: flex-end;
  align-items: center;
  gap: 5px;
  color: ${p => p.$color || '#000'};
  button { width: 14px; color: #8a8a8a; font: bold 14px/14px ${WIDE}; }
`

const AddButton = styled.button`
  height: 14px;
  border-radius: 7px;
  background: #f4f4f4;
  && { color: #35c01e; }
`

const ToolTabs = styled.div`
  display: flex;
  align-items: flex-start;
  height: 25px;
  margin-top: auto;
  border-top: 1px solid #000;
  background: #f0f0f0;
`

const ToolTab = styled.button`
  margin-top: 2px;
  padding: 0 9px;
  line-height: 15px;
  color: #808080;
  border-right: 1px solid #808080;
  sub { font-size: 10px; line-height: 0; color: #f00; margin-left: 1px; }
  &:nth-child(12) { border-right: 0; }
  ${p => p.$active && css`
    height: 20px;
    margin-top: -1px;
    border: 1px solid #000;
    border-top: 0;
    background: #fff;
    color: #000;
  `}
`

const Services = styled.div`
  display: flex;
  gap: 10px;
  margin-left: auto;
  padding: 2px 9px 0 0;
  button { display: flex; align-items: center; gap: 4px; }
`

const StatusBar = styled.div`
  display: flex;
  align-items: center;
  height: 23px;
  padding-left: 2px;
  border-top: 1px solid #a0a0a0;
`

const StatusCells = styled.div`
  display: flex;
  align-items: center;
  height: 18px;
  margin-left: auto;
  i, b { width: 70px; height: 18px; border-left: 1px solid #a0a0a0; }
  b { display: flex; align-items: center; gap: 8px; width: 120px; padding-left: 5px; font-weight: 400; }
`

const TaskbarBox = styled.div`
  display: flex;
  align-items: center;
  height: 40px;
  background: #1c2b32;
  color: #fff;
`

const StartButton = styled.button`
  width: 48px;
  height: 40px;
  padding-left: 15px;
`

const SearchBox = styled.label`
  display: flex;
  align-items: center;
  gap: 11px;
  width: 344px;
  height: 39px;
  margin-right: 3px;
  padding-left: 12px;
  border: 1px solid #b8b8b8;
  background: #f0f0f0;
  input { flex: 1; border: 0; background: none; font-size: 15px; color: #000; }
  input::placeholder { color: #333; }
`

const AppButton = styled.button`
  display: flex;
  align-items: center;
  justify-content: center;
  width: 41px;
  height: 40px;
  margin: 0 4px;
  border-bottom: 3px solid ${p => (p.$open ? '#9cdcf5' : 'transparent')};
`

const Tray = styled.div`
  display: flex;
  align-items: center;
  gap: 9px;
  margin-left: auto;
  padding-right: 18px;
`

const TrayActive = styled.span`
  display: flex;
  align-items: center;
  justify-content: center;
  width: 22px;
  height: 38px;
  background: #36454c;
`

const Lang = styled.span`
  width: 16px;
  background: #000080;
  text-align: center;
`

const Clock = styled.time`
  display: flex;
  flex-direction: column;
  align-items: center;
  width: 62px;
  line-height: 18px;
`

const Dialog = styled.form`
  position: absolute;
  left: 965px;
  bottom: 42px;
  width: 452px;
  border: 1px solid #9a9a9a;
  background: #f0f0f0;
  box-shadow: 2px 2px 6px rgba(0, 0, 0, .35);
  font: 11px/14px ${CHART};
`

const DialogTitle = styled.div`
  display: flex;
  align-items: center;
  justify-content: space-between;
  height: 30px;
  padding: 0 10px 2px 8px;
  background: #fff;
  font: 12px ${UI};
  color: #999;
`

const DialogBody = styled.div`
  display: grid;
  grid-template-columns: 222px 212px;
  gap: 6px;
  padding: 5px 5px 0;
`

const DialogColumn = styled.div`
  display: flex;
  flex-direction: column;
  justify-content: space-between;
  height: 296px;
`

const DialogFooter = styled.div`
  padding: 9px 5px 8px;
`

const TradeGrid = styled.div`
  display: grid;
  grid-template-columns: 145px 65px;
  gap: 12px;
`

const TradeLeft = styled.div`
  display: grid;
  grid-template-columns: 84px 50px;
  gap: 9px 11px;
  align-items: center;
`

const StopGrid = styled.div`
  display: grid;
  grid-template-columns: 42px 71px 44px 65px;
  align-items: center;
`

const TradeStack = styled.div`
  display: flex;
  flex-direction: column;
  gap: ${p => p.$gap}px;
`

const VolumeCell = styled.div`
  display: flex;
  justify-content: flex-end;
`

const kinds = { sell: ['#ff7f50', '#7a2a10'], buy: ['#1e90ff', '#0a3a78'], close: ['#ff0000', '#7a0000'] }

const TradeButton = styled.button.attrs({ type: 'button' })`
  height: ${p => p.$h || 20}px;
  border: 1px solid ${p => (kinds[p.$kind] || ['', '#555'])[1]};
  background: ${p => (kinds[p.$kind] || ['#d3d3d3'])[0]};
  font-size: ${p => (p.$big ? 12 : 11)}px;
  font-weight: ${p => (p.$kind === 'close' ? 700 : 400)};
  line-height: 13px;
  white-space: nowrap;
`

const Line = styled.div`
  display: flex;
  align-items: center;
  gap: ${p => p.$gap || 0}px;
  padding-left: ${p => p.$start || 0}px;
  white-space: nowrap;
`

const Spread = styled(Line)`
  justify-content: space-between;
  padding-right: ${p => p.$end || 0}px;
`

const Trailing = styled.span`
  color: #006400;
  font-weight: 700;
`

const LimitText = styled.span`
  width: 95px;
`

const CheckLabel = styled.label`
  display: flex;
  align-items: center;
  gap: 4px;
  white-space: nowrap;
  ${p => p.$big && css`
    font-size: 14px;
    font-weight: 700;
    color: #006400;
  `}
  input {
    display: flex;
    align-items: center;
    justify-content: center;
    flex: none;
    width: 13px;
    height: 13px;
    border: 1px solid #333;
    background: #fff;
    appearance: none;
  }
  input[type='radio'], input[type='radio']::after { border-radius: 50%; }
  input[type='checkbox']:checked::after {
    content: '';
    width: 9px;
    height: 4px;
    margin-top: -3px;
    border: solid #333;
    border-width: 0 0 1px 1px;
    transform: rotate(-45deg);
  }
  input[type='radio']:checked::after {
    content: '';
    width: 7px;
    height: 7px;
    background: #333;
  }
`

const Group = styled.fieldset`
  display: flex;
  flex-direction: column;
  gap: ${p => (p.$limit ? 2 : 7)}px;
  margin: 0;
  padding: ${p => (p.$limit ? '2px 5px 2px' : '7px 6px 8px')};
  border: 1px solid #dcdcdc;
  legend { margin-left: 2px; padding: 0 2px; }
`

const SignalGrid = styled.div`
  display: grid;
  grid-template-columns: 73px auto;
  gap: 6px 0;
  align-items: center;
`
